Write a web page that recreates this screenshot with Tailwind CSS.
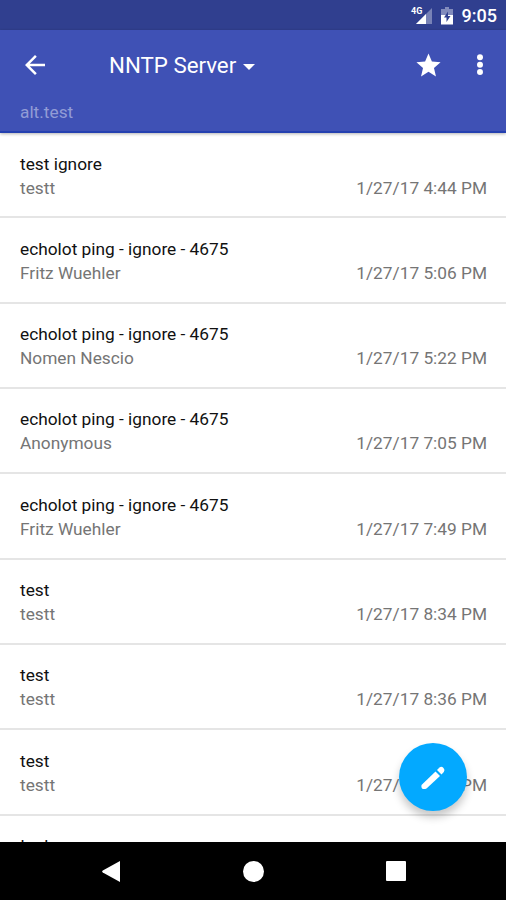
<!DOCTYPE html>
<html lang="en">
<head>
  <meta charset="UTF-8">
  <meta name="viewport" content="width=device-width, initial-scale=1.0">
  <title>NNTP Server</title>
  <script src="https://cdn.jsdelivr.net/npm/@tailwindcss/browser@4"></script>
</head>
<body class="bg-white font-[Roboto,sans-serif]">
  <div class="relative flex h-[900px] w-[506px] flex-col overflow-hidden">

    <!-- Status bar -->
    <div class="flex h-[30px] shrink-0 items-center justify-end bg-[#303f8f] pt-[2px] pr-[9px] text-white">
      <svg class="mr-[9px] h-[20px] w-[22px]" viewBox="0 0 22 20">
        <path d="M22 2v16H6z" fill="#fff" fill-opacity=".35"/>
        <path d="M16 8v10H6z" fill="#fff"/>
        <path d="M0 0h13v7l-2 2H0z" fill="#303f8f"/>
        <text x="1" y="8" font-size="9" font-weight="700" fill="#fff">4G</text>
      </svg>
      <svg class="mr-[9px] h-[18px] w-[12px]" viewBox="0 0 12 18">
        <path d="M4 0h4v2h4v6H0V2h4z" fill="#fff" fill-opacity=".4"/>
        <path d="M0 8h12v9.500H0z" fill="#fff"/>
        <path d="M7 4.500L3 10.500h2.500v4.500L9.500 9H7z" fill="#303f8f"/>
      </svg>
      <span class="text-[18px] leading-[28px] font-medium">9:05</span>
    </div>

    <!-- App bar -->
    <header class="relative z-10 h-[103px] shrink-0 border-b-2 border-[#2440b0] bg-[#3f51b5] text-white shadow-[0_1px_3px_rgba(0,0,0,0.3)]">
      <div class="flex h-[70px] items-center pl-[20px]">
        <svg class="h-[30px] w-[30px]" viewBox="0 0 24 24" fill="#fff">
          <path d="M20 11H7.830l5.590-5.590L12 4l-8 8 8 8 1.410-1.410L7.830 13H20z"/>
        </svg>
        <h1 class="ml-[59px] text-[22.300px] leading-[30px]">NNTP Server</h1>
        <svg class="mt-[3px] ml-[7px] h-[6px] w-[12px]" viewBox="0 0 12 6" fill="#fff"><path d="M0 0h12L6 6z"/></svg>
        <svg class="ml-auto h-[29px] w-[29px]" viewBox="0 0 24 24" fill="#fff">
          <path d="M12 17.270L18.180 21l-1.640-7.030L22 9.240l-7.190-.61L12 2 9.190 8.630 2 9.240l5.460 4.730L5.820 21z"/>
        </svg>
        <svg class="mr-[9.500px] ml-[20px] h-[34px] w-[34px]" viewBox="0 0 24 24" fill="#fff">
          <circle cx="12" cy="6.500" r="2.100"/><circle cx="12" cy="11.800" r="2.100"/><circle cx="12" cy="17" r="2.100"/>
        </svg>
      </div>
      <p class="pl-[20px] text-[17.300px] leading-[24px] text-[#929cd6]">alt.test</p>
    </header>

    <!-- Messages -->
    <main class="min-h-0 flex-1 overflow-hidden text-[17.300px] leading-[24px] text-[#757575]">
      <div class="h-[85.330px] border-b-2 border-[#e5e5e5] pr-[19px] pl-[20px] pt-[18.500px]">
        <p class="text-[#111]">test ignore</p>
        <div class="flex justify-between"><span>testt</span><span>1/27/17 4:44 PM</span></div>
      </div>
      <div class="h-[85.330px] border-b-2 border-[#e5e5e5] pr-[19px] pl-[20px] pt-[18.500px]">
        <p class="text-[#111]">echolot ping - ignore - 4675</p>
        <div class="flex justify-between"><span>Fritz Wuehler</span><span>1/27/17 5:06 PM</span></div>
      </div>
      <div class="h-[85.330px] border-b-2 border-[#e5e5e5] pr-[19px] pl-[20px] pt-[18.500px]">
        <p class="text-[#111]">echolot ping - ignore - 4675</p>
        <div class="flex justify-between"><span>Nomen Nescio</span><span>1/27/17 5:22 PM</span></div>
      </div>
      <div class="h-[85.330px] border-b-2 border-[#e5e5e5] pr-[19px] pl-[20px] pt-[18.500px]">
        <p class="text-[#111]">echolot ping - ignore - 4675</p>
        <div class="flex justify-between"><span>Anonymous</span><span>1/27/17 7:05 PM</span></div>
      </div>
      <div class="h-[85.330px] border-b-2 border-[#e5e5e5] pr-[19px] pl-[20px] pt-[18.500px]">
        <p class="text-[#111]">echolot ping - ignore - 4675</p>
        <div class="flex justify-between"><span>Fritz Wuehler</span><span>1/27/17 7:49 PM</span></div>
      </div>
      <div class="h-[85.330px] border-b-2 border-[#e5e5e5] pr-[19px] pl-[20px] pt-[18.500px]">
        <p class="text-[#111]">test</p>
        <div class="flex justify-between"><span>testt</span><span>1/27/17 8:34 PM</span></div>
      </div>
      <div class="h-[85.330px] border-b-2 border-[#e5e5e5] pr-[19px] pl-[20px] pt-[18.500px]">
        <p class="text-[#111]">test</p>
        <div class="flex justify-between"><span>testt</span><span>1/27/17 8:36 PM</span></div>
      </div>
      <div class="h-[85.330px] border-b-2 border-[#e5e5e5] pr-[19px] pl-[20px] pt-[18.500px]">
        <p class="text-[#111]">test</p>
        <div class="flex justify-between"><span>testt</span><span>1/27/17 8:37 PM</span></div>
      </div>
      <div class="h-[85.330px] px-[20px] pt-[17px]">
        <p class="text-[#111]">test</p>
      </div>
    </main>

    <!-- Compose button -->
    <button class="absolute top-[743px] left-[399px] flex size-[68px] items-center justify-center rounded-full bg-[#03a9ff] shadow-[0_6px_9px_rgba(0,0,0,0.22)]">
      <svg class="size-[30px]" viewBox="0 0 30 30" fill="#fff">
        <path d="M3.500 23L17.500 9.500L22 14L8.500 26.500Q6 27.500 4 26.500Q3 25.500 3.500 23z"/>
        <path d="M19 8L21.500 5.500Q23.500 4 25.500 6Q27.300 8 25.800 10L23.500 12.500z"/>
      </svg>
    </button>

    <!-- Navigation bar -->
    <nav class="flex h-[58px] shrink-0 items-center bg-black pl-[102px]">
      <svg class="h-[21px] w-[18px]" viewBox="0 0 18 21" fill="#fff"><path d="M18 0v21L.8 11.500Q-.5 10.500.8 9.500z"/></svg>
      <div class="ml-[123px] size-[21px] rounded-full bg-white"></div>
      <div class="ml-[122px] size-[20px] rounded-[1px] bg-white"></div>
    </nav>
  </div>
</body>
</html>
